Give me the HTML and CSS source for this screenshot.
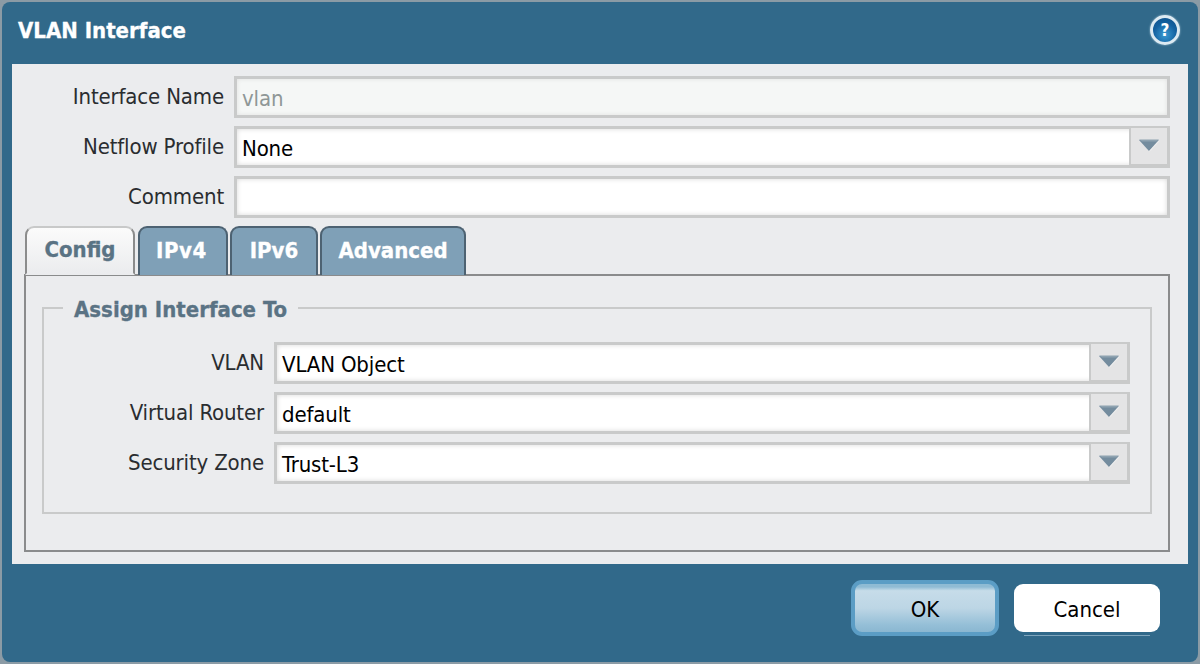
FILE: index.html
```html
<!DOCTYPE html>
<html lang="en">
<head>
<meta charset="utf-8">
<title>VLAN Interface</title>
<link rel="stylesheet" href="styles.css">
</head>
<body>
<div class="dialog">
  <header class="titlebar">
    <h1 class="title">VLAN Interface</h1>
    <span class="help"><span class="help-mark">?</span></span>
  </header>
  <main class="panel">
    <div class="form">
      <label class="label">Interface Name</label>
      <div class="field field-disabled"><span class="value">vlan</span></div>
      <label class="label">Netflow Profile</label>
      <div class="field"><span class="value">None</span><span class="drop"><svg class="arrow" viewBox="0 0 22 14"><path d="M1 2h20L11 13z" fill="#748c9e"/><path d="M1 1.500h20l-2.500 2H4z" fill="#8ea2b0"/><path d="M21 2L11 13l1 .5L21.500 3z" fill="#f4f4f4" opacity=".6"/></svg></span></div>
      <label class="label">Comment</label>
      <div class="field"><span class="value"></span></div>
    </div>
    <nav class="tabs">
      <span class="tab tab-active tab-config">Config</span>
      <span class="tab tab-ipv4">IPv4</span>
      <span class="tab tab-ipv6">IPv6</span>
      <span class="tab tab-adv">Advanced</span>
    </nav>
    <section class="tabpanel">
      <fieldset class="group">
        <legend class="legend">Assign Interface To</legend>
        <div class="form form-inner">
          <label class="label">VLAN</label>
          <div class="field"><span class="value">VLAN Object</span><span class="drop"><svg class="arrow" viewBox="0 0 22 14"><path d="M1 2h20L11 13z" fill="#748c9e"/><path d="M1 1.500h20l-2.500 2H4z" fill="#8ea2b0"/><path d="M21 2L11 13l1 .5L21.500 3z" fill="#f4f4f4" opacity=".6"/></svg></span></div>
          <label class="label">Virtual Router</label>
          <div class="field"><span class="value">default</span><span class="drop"><svg class="arrow" viewBox="0 0 22 14"><path d="M1 2h20L11 13z" fill="#748c9e"/><path d="M1 1.500h20l-2.500 2H4z" fill="#8ea2b0"/><path d="M21 2L11 13l1 .5L21.500 3z" fill="#f4f4f4" opacity=".6"/></svg></span></div>
          <label class="label">Security Zone</label>
          <div class="field"><span class="value">Trust-L3</span><span class="drop"><svg class="arrow" viewBox="0 0 22 14"><path d="M1 2h20L11 13z" fill="#748c9e"/><path d="M1 1.500h20l-2.500 2H4z" fill="#8ea2b0"/><path d="M21 2L11 13l1 .5L21.500 3z" fill="#f4f4f4" opacity=".6"/></svg></span></div>
        </div>
      </fieldset>
    </section>
  </main>
  <footer class="actions">
    <button class="btn btn-ok">OK</button>
    <button class="btn btn-cancel">Cancel</button>
  </footer>
</div>
</body>
</html>
```
FILE: styles.css
```css
* { box-sizing: border-box; }
html, body { margin: 0; height: 664px; overflow: hidden; }
body {
  background: #8b9ba5;
  padding: 2px;
  font-family: "DejaVu Sans", Verdana, sans-serif;
  font-stretch: condensed;
  font-size: 22px;
  color: #2a2d30;
}
.dialog {
  height: 660px;
  background: #31698a;
  border-radius: 8px;
  display: flex;
  flex-direction: column;
}
.titlebar {
  height: 62px;
  flex: none;
  display: flex;
  align-items: center;
  justify-content: space-between;
  padding: 0 18px 6px 16px;
}
.title {
  margin: 0;
  font-size: 22px;
  font-weight: 700;
  color: #fff;
  -webkit-text-stroke: 0.3px #fff;
}
.help {
  width: 30px;
  height: 30px;
  border-radius: 50%;
  border: 3px solid #dceaf2;
  background: radial-gradient(circle at 50% 70%, #3a9ad2 0, #1361a0 55%, #0f4f88 100%);
  box-shadow: 0 0 2px #a9c6d8;
  display: flex;
  align-items: center;
  justify-content: center;
}
.help-mark { color: #fff; font-weight: 700; font-size: 17px; line-height: 1; }
.panel {
  flex: none;
  height: 500px;
  margin: 0 10px;
  background: #ebecee;
  padding: 12px 18px 0 12px;
}
.form {
  display: grid;
  grid-template-columns: 200px 936px;
  column-gap: 10px;
  row-gap: 8px;
}
.form-inner { grid-template-columns: 220px 856px; }
.label {
  text-align: right;
  line-height: 41px;
  letter-spacing: -0.15px;
  white-space: nowrap;
}
.field {
  height: 42px;
  display: flex;
  border: 3px solid #c9caca;
  background: #fff;
  box-shadow: inset 0 0 5px #d8d8d8;
  color: #000;
}
.field-disabled { background: #f5f7f6; box-shadow: inset 0 0 4px #e0e0e0; color: #8f9797; }
.value {
  flex: 1;
  padding-left: 5px;
  line-height: 39px;
  letter-spacing: -0.15px;
}
.drop {
  flex: none;
  width: 41px;
  margin: -3px -3px -3px 0;
  border: 2px solid #c9caca;
  border-bottom-width: 4px;
  border-right-width: 3px;
  background: #e4e4e5;
  display: flex;
  align-items: center;
  justify-content: center;
}
.arrow { width: 22px; height: 14px; margin-top: -3px; }
.tabs {
  display: flex;
  margin-top: 8px;
  height: 49px;
  align-items: stretch;
  position: relative;
  z-index: 1;
}
.tab {
  display: flex;
  align-items: center;
  justify-content: center;
  padding-bottom: 3px;
  background: #7fa0b7;
  color: #fff;
  font-weight: 700;
  font-size: 22px;
  -webkit-text-stroke: 0.3px currentColor;
  border: 2px solid #4d6272;
  border-bottom: 0;
  border-radius: 9px 9px 0 0;
  height: 49px;
}
.tab-active {
  background: #f3f4f5;
  color: #5a7384;
  border-color: #8b8c8c;
  border-top-color: #c8c9c9;
  height: 49px;
  border-bottom: 2px solid #f3f4f5;
  margin-bottom: -1px;
}
.tab-config { width: 110px; margin-left: 1px; margin-right: 3px; background: linear-gradient(#fbfbfb, #ebecee); border-bottom-color: #ebecee; }
.tab-ipv4 { width: 90px; margin-right: 2px; letter-spacing: 0.6px; padding-right: 3px; }
.tab-ipv6 { width: 88px; margin-right: 2px; }
.tab-adv { width: 146px; }
.tabpanel {
  height: 278px;
  margin-top: -1px;
  border: 2px solid #8a8b8c;
  padding: 18px 16px 0 16px;
}
.group {
  margin: 0;
  height: 220px;
  border: 2px solid #c9caca;
  padding: 20px 0 0 0;
  min-width: 0;
}
.legend {
  margin-left: 19px;
  padding: 4px 11px 0;
  font-weight: 700;
  font-size: 22px;
  color: #5a7384;
  line-height: 24px;
  -webkit-text-stroke: 0.3px currentColor;
}
.actions {
  flex: 1;
  display: flex;
  justify-content: flex-end;
  align-items: center;
  gap: 15px;
  padding: 0 38px 10px 0;
}
.btn {
  font-family: inherit;
  font-stretch: condensed;
  font-size: 22px;
  color: #000;
  cursor: pointer;
  padding: 2px 0 0;
}
.btn-ok {
  width: 148px;
  height: 56px;
  border: 4px solid #5b9dc5;
  border-radius: 11px;
  background: linear-gradient(#8fbbd4 0, #8fbbd4 6%, #c6dce9 14%, #bdd6e5 50%, #95bfd7 85%, #8ab7d1 100%);
}
.btn-cancel {
  width: 146px;
  height: 48px;
  border: 0;
  border-radius: 9px;
  background: #fff;
  position: relative;
}
.btn-cancel::after {
  content: "";
  position: absolute;
  left: 10px;
  right: 10px;
  bottom: -4px;
  height: 1px;
  background: #7ea5bd;
}
```
